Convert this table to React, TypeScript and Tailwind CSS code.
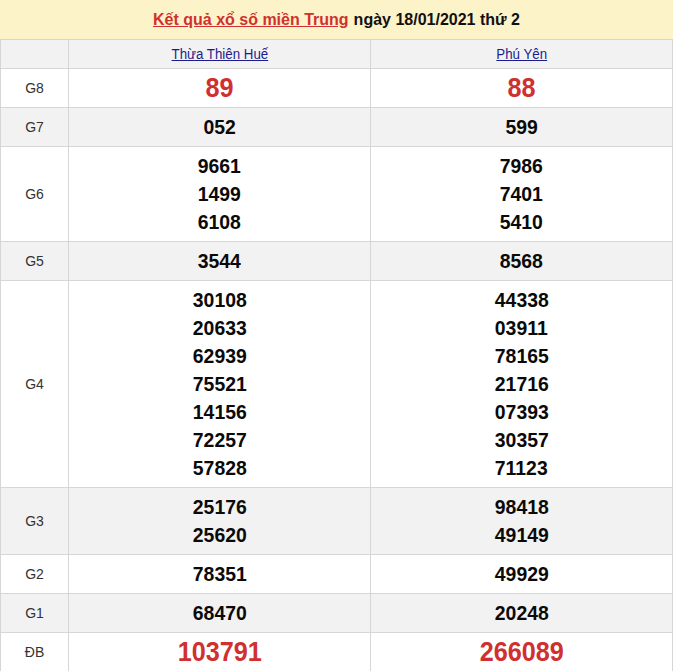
import React from "react";

type Row = { label: string; a: string[]; b: string[]; red?: boolean; gray: boolean };

const rows: Row[] = [
  { label: "G8", a: ["89"], b: ["88"], red: true, gray: false },
  { label: "G7", a: ["052"], b: ["599"], gray: true },
  { label: "G6", a: ["9661", "1499", "6108"], b: ["7986", "7401", "5410"], gray: false },
  { label: "G5", a: ["3544"], b: ["8568"], gray: true },
  {
    label: "G4",
    a: ["30108", "20633", "62939", "75521", "14156", "72257", "57828"],
    b: ["44338", "03911", "78165", "21716", "07393", "30357", "71123"],
    gray: false,
  },
  { label: "G3", a: ["25176", "25620"], b: ["98418", "49149"], gray: true },
  { label: "G2", a: ["78351"], b: ["49929"], gray: false },
  { label: "G1", a: ["68470"], b: ["20248"], gray: true },
  { label: "ĐB", a: ["103791"], b: ["266089"], red: true, gray: false },
];

function Cell({ nums, red }: { nums: string[]; red?: boolean }) {
  return (
    <td className="border border-[#d6d6d6] py-[5px] text-center align-middle">
      {nums.map((n) => (
        <div key={n} className="h-[28px] flex items-center justify-center">
          <span
            className={
              red
                ? "inline-block font-bold text-[28px] leading-[28px] text-[#d0302f] scale-x-[0.9]"
                : "inline-block font-bold text-[20px] leading-[28px] text-[#0a0a0a] scale-x-[0.97] scale-y-[1.05]"
            }
          >
            {n}
          </span>
        </div>
      ))}
    </td>
  );
}

export default function App() {
  return (
    <div className="w-[673px] h-[671px] overflow-hidden bg-white" style={{ fontFamily: '"Liberation Sans", Arial, sans-serif' }}>
      <div className="h-[39px] bg-[#fdf3c8] flex items-center justify-center text-[16px] font-bold">
        <span className="text-[#d0302f] underline">Kết quả xổ số miền Trung</span>
        <span className="text-[#111] ml-[5px]">ngày 18/01/2021 thứ 2</span>
      </div>
      <table className="w-[672px] border-collapse table-fixed">
        <colgroup>
          <col className="w-[68px]" />
          <col className="w-[302px]" />
          <col className="w-[302px]" />
        </colgroup>
        <thead>
          <tr className="bg-[#f2f2f2] h-[29px]">
            <th className="border border-[#d6d6d6]"></th>
            <th className="border border-[#d6d6d6] font-normal text-[14px] text-[#1c1c8f]">
              <span className="inline-block underline scale-x-[0.95]">Thừa Thiên Huế</span>
            </th>
            <th className="border border-[#d6d6d6] font-normal text-[14px] text-[#1c1c8f]">
              <span className="inline-block underline scale-x-[0.95]">Phú Yên</span>
            </th>
          </tr>
        </thead>
        <tbody>
          {rows.map((r) => (
            <tr key={r.label} className={r.gray ? "bg-[#f2f2f2]" : "bg-white"}>
              <td className="border border-[#d6d6d6] text-center text-[14px] text-[#333]">{r.label}</td>
              <Cell nums={r.a} red={r.red} />
              <Cell nums={r.b} red={r.red} />
            </tr>
          ))}
        </tbody>
      </table>
    </div>
  );
}
